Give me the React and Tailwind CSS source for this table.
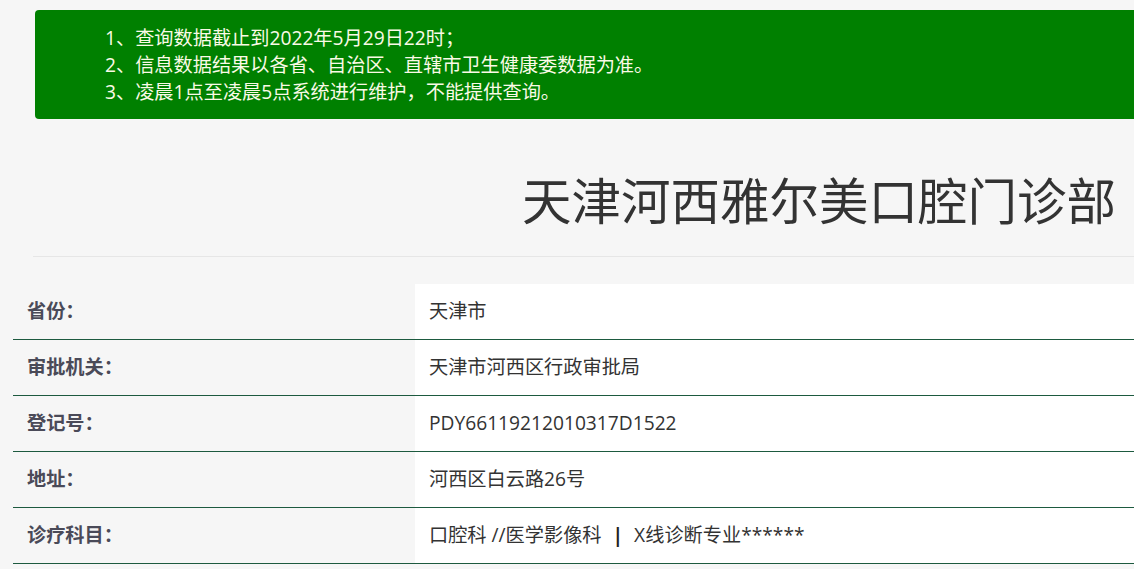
const notices = [
  "1、查询数据截止到2022年5月29日22时；",
  "2、信息数据结果以各省、自治区、直辖市卫生健康委数据为准。",
  "3、凌晨1点至凌晨5点系统进行维护，不能提供查询。",
];

const rows = [
  ["省份：", "天津市"],
  ["审批机关：", "天津市河西区行政审批局"],
  ["登记号：", "PDY66119212010317D1522"],
  ["地址：", "河西区白云路26号"],
  [
    "诊疗科目：",
    <>
      口腔科 //医学影像科 <span className="font-bold text-[#222] mx-[6px]">|</span> X线诊断专业******
    </>,
  ],
];

export default function App() {
  return (
    <div
      className="w-[1134px] h-[569px] overflow-hidden bg-[#f6f6f6] text-[#333]"
      style={{ fontFamily: '"Open Sans", "Noto Sans CJK SC", sans-serif' }}
    >
      <div className="pt-[10px] pl-[35px]">
        <div className="bg-[#008000] rounded-l-[4px] h-[109px] pl-[70px] pt-[14px] text-[19.2px] leading-[27px] text-[#fafae6]">
          {notices.map((n) => (
            <div key={n}>{n}</div>
          ))}
        </div>
      </div>

      <div className="ml-[33px] mt-[31px] h-[107px] border-b border-[#e6e6e6] flex items-center justify-end pr-[18px] pb-[2px]">
        <h1 className="text-[49.5px] leading-none font-normal text-[#333]">天津河西雅尔美口腔门诊部</h1>
      </div>

      <div className="ml-[13px] mt-[27px]">
        {rows.map(([k, v]) => (
          <div key={k} className="flex h-[56px] border-b border-[#1d5a3f]">
            <div className="w-[402px] shrink-0 flex items-center pl-[14px] text-[19.2px] font-bold text-[#4a4a58] bg-[#f6f6f6]">
              {k}
            </div>
            <div className="flex-1 flex items-center pl-[14px] text-[19.2px] text-[#333] bg-white whitespace-pre">{v}</div>
          </div>
        ))}
      </div>
    </div>
  );
}
